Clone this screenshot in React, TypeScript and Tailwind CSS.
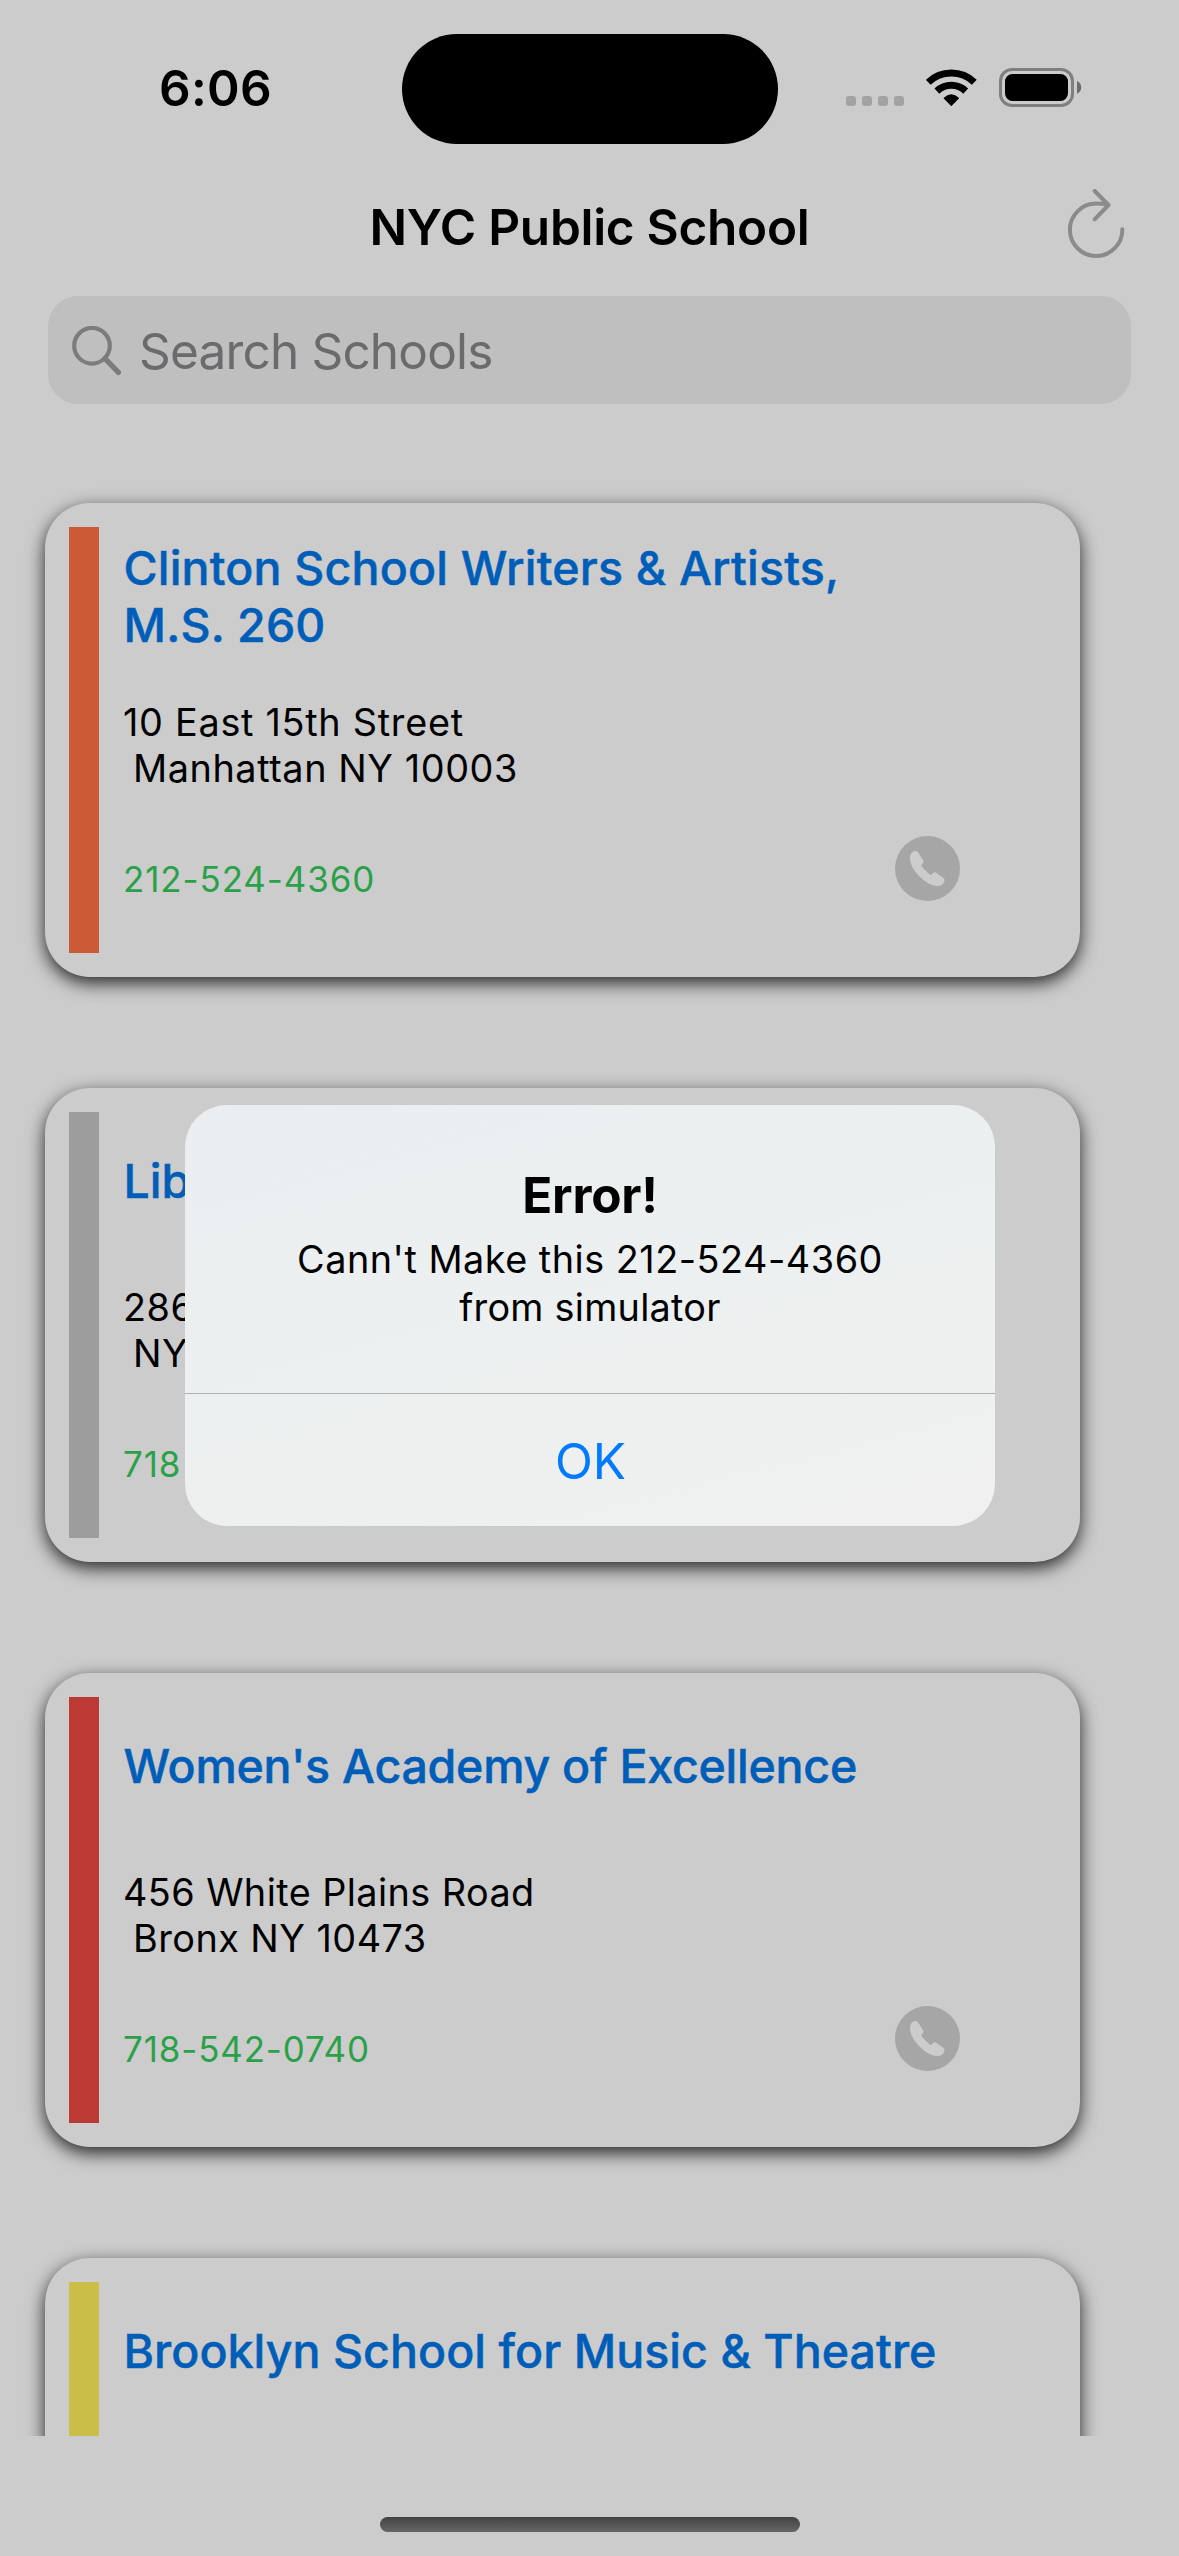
type School = {
  name: string[];
  nameClass: string;
  address?: [string, string];
  addressClasses?: [string, string];
  phone?: string;
  phoneClass?: string;
  barClass: string;
};

const schools: School[] = [
  {
    name: ["Clinton School Writers & Artists,", "M.S. 260"],
    nameClass: "tracking-[0.19px]",
    address: ["10 East 15th Street", "Manhattan NY 10003"],
    addressClasses: ["tracking-[0.72px]", "tracking-[0.58px]"],
    phone: "212-524-4360",
    phoneClass: "tracking-[0.93px]",
    barClass: "bg-[#cb5a35]",
  },
  {
    name: ["Lib"],
    nameClass: "tracking-normal",
    address: ["286", "NY"],
    addressClasses: ["tracking-[0.5px]", "tracking-[0.5px]"],
    phone: "718",
    phoneClass: "tracking-[0.9px]",
    barClass: "bg-[#9d9d9d]",
  },
  {
    name: ["Women's Academy of Excellence"],
    nameClass: "tracking-[-0.25px]",
    address: ["456 White Plains Road", "Bronx NY 10473"],
    addressClasses: ["tracking-[0.43px]", "tracking-[0.46px]"],
    phone: "718-542-0740",
    phoneClass: "tracking-[0.89px]",
    barClass: "bg-[#bd3a34]",
  },
  {
    name: ["Brooklyn School for Music & Theatre"],
    nameClass: "tracking-[0.06px]",
    barClass: "bg-[#cbbe48]",
  },
];

function WifiIcon() {
  return (
    <svg width="51" height="39" viewBox="0 0 51 39" fill="none">
      <path d="M2.3 14.3A33.3 33.3 0 0 1 48.3 14.3" stroke="#000" strokeWidth="7" />
      <path d="M10.9 23.1A20.9 20.9 0 0 1 39.7 23.1" stroke="#000" strokeWidth="7" />
      <path
        d="M25.3 37.4L18.2 30.2Q25.3 23.4 32.4 30.2Z"
        fill="#000"
        stroke="#000"
        strokeWidth="1.2"
        strokeLinejoin="round"
      />
    </svg>
  );
}

function BatteryIcon() {
  return (
    <svg width="83" height="39" viewBox="0 0 83 39" fill="none">
      <rect x="1.5" y="1.5" width="72" height="36" rx="11.5" stroke="#7f7f7f" strokeWidth="3" />
      <rect x="6" y="6" width="63" height="27" rx="7.5" fill="#000" />
      <path d="M78 13C80.6 14 82.2 16.5 82.2 19.4C82.2 22.2 80.6 24.7 78 25.7Z" fill="#6c6c6c" />
    </svg>
  );
}

function RefreshIcon() {
  return (
    <svg
      width="57"
      height="69"
      viewBox="0 0 57 69"
      fill="none"
      stroke="#8b8b8b"
      strokeWidth="4"
      strokeLinecap="round"
      strokeLinejoin="round"
    >
      <path d="M54.3 40.2A26.2 26.2 0 1 1 28.2 14.6C32.5 14.6 36 15 40.2 16" />
      <path d="M26.7 2L40.5 16L26.7 30.4" />
    </svg>
  );
}

function SearchIcon() {
  return (
    <svg width="50" height="50" viewBox="0 0 50 50" fill="none" stroke="#7c7c7c">
      <circle cx="20" cy="19.8" r="17.8" strokeWidth="4.2" />
      <path d="M33 32.6L46.4 46.4" strokeWidth="5.2" strokeLinecap="round" />
    </svg>
  );
}

function PhoneIcon() {
  return (
    <svg width="65" height="65" viewBox="0 0 65 65">
      <circle cx="32.5" cy="32.5" r="32.5" fill="#a6a6a6" />
      <path
        d="M19.6 15.1C16.6 16 14.8 19 15 22.8C15.3 28.6 18.6 34.4 24.6 40.6C30.6 46.6 36.4 49.9 42.2 50C45.9 50.1 48.6 48.2 49.4 45.2C49.8 43.6 49.2 42.6 47.9 41.6L41.4 36.9C40.2 36.1 38.8 36.2 37.9 37.2L36.6 38.5C36 39.1 35.3 39 34.7 38.5C31.8 36.2 29 33.3 26.7 30.3C26.2 29.6 26.2 29 26.7 28.4L27.9 27.1C28.7 26.2 28.7 25.2 28 24.1L23.2 16.6C22.4 15.3 21.2 14.7 19.6 15.1Z"
        fill="#cccccc"
      />
    </svg>
  );
}

function StatusBar() {
  return (
    <div className="mt-[33.5px] flex h-[111px] shrink-0 items-start">
      <div className="w-[402px] pl-[159px] text-[49.5px] leading-[109px] font-semibold tracking-[0.3px]">
        6:06
      </div>
      <div className="h-[110.5px] w-[375.5px] rounded-full bg-black" />
      <div className="mt-[34.5px] ml-[68.5px] flex items-end">
        <div className="mb-px flex gap-[6px]">
          {[0, 1, 2, 3].map((dot) => (
            <span key={dot} className="size-[10px] rounded-[3px] bg-[#a3a3a3]" />
          ))}
        </div>
        <div className="ml-[22px]">
          <WifiIcon />
        </div>
        <div className="ml-[22px]">
          <BatteryIcon />
        </div>
      </div>
    </div>
  );
}

function SchoolCard({ school }: { school: School }) {
  return (
    <article className="flex h-[474px] w-[1035px] shrink-0 gap-6 rounded-[45px] bg-[#cccccc] p-6 shadow-[0_6px_18px_rgba(0,0,0,0.82)]">
      <div className={`w-[30px] shrink-0 ${school.barClass}`} />
      <div className="flex w-[837px] flex-col whitespace-nowrap">
        <h2
          className={`flex h-[138px] flex-col justify-center pt-px pl-[0.5px] text-[46.5px] leading-[57px] font-medium text-[#005eb9] [-webkit-text-stroke:0.5px_#005eb9] ${school.nameClass}`}
        >
          {school.name.map((line) => (
            <span key={line}>{line}</span>
          ))}
        </h2>
        {school.address && school.addressClasses && (
          <div className="mt-[34px] flex h-[93px] flex-col text-[37.8px] leading-[46px]">
            <span className={school.addressClasses[0]}>{school.address[0]}</span>
            <span className={`pl-[10px] ${school.addressClasses[1]}`}>{school.address[1]}</span>
          </div>
        )}
        {school.phone && (
          <div className="mt-11 flex h-[65px] justify-between">
            <span
              className={`pt-[22px] text-[34.9px] leading-[43px] text-[#2aa148] ${school.phoneClass}`}
            >
              {school.phone}
            </span>
            <PhoneIcon />
          </div>
        )}
      </div>
    </article>
  );
}

function ErrorDialog() {
  return (
    <div
      role="alertdialog"
      className="absolute top-[1105px] left-[185px] flex h-[421px] w-[810px] flex-col overflow-hidden rounded-[42px] bg-linear-[165deg,#eaeef1,#edf0f0_50%,#f0f0f0] text-center"
    >
      <div className="h-[288px] pt-[60px]">
        <div className="text-[49.5px] leading-[60px] font-bold tracking-[-0.2px]">Error!</div>
        <div className="mt-[10px] text-[37.8px] leading-[48px]">
          <div className="tracking-[0.5px]">Cann't Make this 212-524-4360</div>
          <div className="tracking-[0.26px]">from simulator</div>
        </div>
      </div>
      <button className="flex-1 border-t border-[#b0b0b0] pt-[3px] pl-px text-[49.5px] leading-none text-[#007aff]">
        OK
      </button>
    </div>
  );
}

export default function App() {
  return (
    <main className="relative flex h-[2556px] w-[1179px] flex-col overflow-hidden bg-[#cccccc] font-['Inter',sans-serif] text-black">
      <StatusBar />
      <header className="grid h-[151.5px] shrink-0 grid-cols-[1fr_auto_1fr] items-center pt-[13.5px]">
        <span />
        <h1 className="pt-px text-[49.5px] leading-none font-semibold tracking-[-0.28px]">
          NYC Public School
        </h1>
        <div className="-mt-[7px] mr-[54px] justify-self-end">
          <RefreshIcon />
        </div>
      </header>
      <div className="mx-12 flex h-[108px] shrink-0 items-center rounded-[30px] bg-[#bfbfbf] pl-6">
        <div className="pt-px">
          <SearchIcon />
        </div>
        <span className="ml-[17px] pt-[3px] text-[49.5px] leading-none tracking-[-0.82px] text-[#6b6b6d]">
          Search Schools
        </span>
      </div>
      <section className="flex h-[2032px] shrink-0 flex-col gap-[111px] overflow-hidden pt-[99px] pl-[45px]">
        {schools.map((school) => (
          <SchoolCard key={school.name[0]} school={school} />
        ))}
      </section>
      <div className="mt-[81px] h-[15px] w-[420px] shrink-0 self-center rounded-full bg-linear-to-b from-[#424242] to-[#666666]" />
      <ErrorDialog />
    </main>
  );
}
